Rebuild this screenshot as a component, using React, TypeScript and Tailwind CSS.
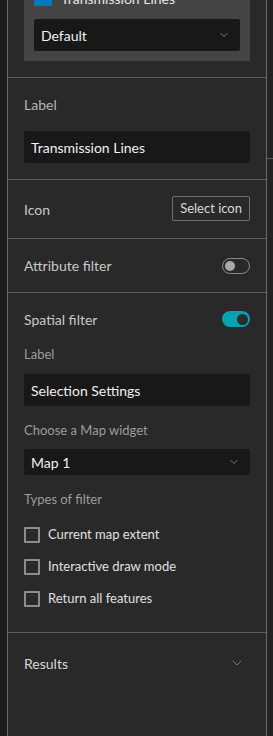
import { ChevronDown } from "lucide-react";

function Toggle({ on }: { on: boolean }) {
  if (on) {
    return (
      <div className="w-[28px] h-[16px] rounded-full bg-[#00a2b3] flex items-center justify-end pr-[2px]">
        <div className="w-[11px] h-[11px] rounded-full bg-[#2b2b2b]" />
      </div>
    );
  }
  return (
    <div className="w-[28px] h-[16px] rounded-full border border-[#8a8a8a] flex items-center pl-[2px]">
      <div className="w-[10px] h-[10px] rounded-full bg-[#a8a8a8]" />
    </div>
  );
}

function Checkbox({ label }: { label: string }) {
  return (
    <div className="h-[20px] flex items-center gap-[8px]">
      <div className="w-[16px] h-[16px] border-2 border-[#8c8c8c] rounded-[1px]" />
      <span className="text-[13px] text-[#e0e0e0]">{label}</span>
    </div>
  );
}

function Sep() {
  return <div className="h-px bg-[#5c5c5c]" />;
}

export default function App() {
  return (
    <div
      className="w-[273px] h-[736px] overflow-hidden bg-[#1c1c1c] flex"
      style={{ fontFamily: 'Lato, "Noto Sans", sans-serif' }}
    >
      <div className="w-[7px] shrink-0" />
      <div className="w-[260px] shrink-0 bg-[#292929] border-x border-[#6a6a6a] flex flex-col">
        {/* layer card */}
        <div className="px-[16px] pb-[16px]">
          <div className="-mt-[22px] bg-[#444444] pt-[10px] px-[10px] pb-[10px]">
            <div className="h-[20px] flex items-center gap-[9px]">
              <div className="w-[18px] h-[16px] bg-[#0079c1]" />
              <span className="text-[14px] text-[#e6e6e6]">Transmission Lines</span>
            </div>
            <div className="mt-[11px] h-[32px] bg-[#181818] rounded-[2px] flex items-center justify-between pl-[7px] pr-[10px]">
              <span className="text-[14px] text-[#f0f0f0]">Default</span>
              <ChevronDown size={12} strokeWidth={1.5} className="text-[#9a9a9a]" />
            </div>
          </div>
        </div>
        <Sep />

        {/* label */}
        <div className="px-[16px] pt-[16px] pb-[16px]">
          <div className="h-[20px] flex items-center text-[14px] text-[#b4b4b4]">Label</div>
          <div className="mt-[17px] h-[32px] bg-[#181818] rounded-[2px] flex items-center px-[7px] text-[14px] text-[#f0f0f0]">
            Transmission Lines
          </div>
        </div>
        <Sep />

        {/* icon */}
        <div className="px-[16px] pt-[16px] pb-[17px] flex items-center justify-between">
          <span className="text-[14px] text-[#c8c8c8] mt-[2px]">Icon</span>
          <div className="h-[25px] px-[7px] border border-[#6e6e6e] rounded-[2px] flex items-center text-[13px] text-[#d8d8d8]">
            Select icon
          </div>
        </div>
        <Sep />

        {/* attribute filter */}
        <div className="px-[16px] pt-[16px] pb-[16px] h-[53px] flex items-center justify-between">
          <span className="text-[14px] text-[#c8c8c8]">Attribute filter</span>
          <Toggle on={false} />
        </div>
        <Sep />

        {/* spatial filter */}
        <div className="px-[16px] pt-[16px] pb-[23px]">
          <div className="h-[20px] flex items-center justify-between">
            <span className="text-[14px] text-[#c8c8c8]">Spatial filter</span>
            <Toggle on={true} />
          </div>
          <div className="mt-[16px] h-[20px] flex items-center text-[13px] text-[#9c9c9c]">Label</div>
          <div className="mt-[9px] h-[32px] bg-[#181818] rounded-[2px] flex items-center px-[7px] text-[14px] text-[#f0f0f0]">
            Selection Settings
          </div>
          <div className="mt-[15px] h-[20px] flex items-center text-[13px] text-[#9c9c9c]">Choose a Map widget</div>
          <div className="mt-[8px] h-[26px] bg-[#181818] rounded-[2px] flex items-center justify-between pl-[7px] pr-[10px]">
            <span className="text-[14px] text-[#f0f0f0]">Map 1</span>
            <ChevronDown size={12} strokeWidth={1.5} className="text-[#9a9a9a]" />
          </div>
          <div className="mt-[15px] h-[20px] flex items-center text-[13px] text-[#9c9c9c]">Types of filter</div>
          <div className="mt-[15px] flex flex-col gap-[12px]">
            <Checkbox label="Current map extent" />
            <Checkbox label="Interactive draw mode" />
            <Checkbox label="Return all features" />
          </div>
        </div>
        <Sep />

        {/* results */}
        <div className="px-[16px] pt-[20px] flex items-center justify-between">
          <span className="h-[20px] flex items-center text-[14px] text-[#d8d8d8]">Results</span>
          <ChevronDown size={16} strokeWidth={1} className="text-[#a0a0a0] mr-[5px]" />
        </div>
      </div>
      <div className="flex-1 bg-[#232323] flex flex-col">
        <div className="h-[158px]" />
        <div className="h-px bg-[#5c5c5c]" />
      </div>
    </div>
  );
}
